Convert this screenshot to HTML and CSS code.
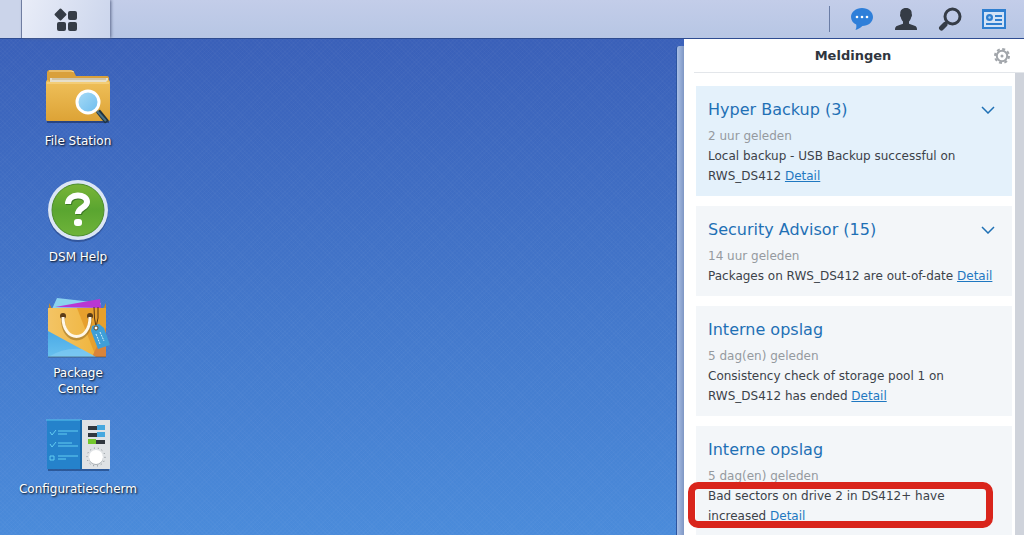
FILE: index.html
```html
<!DOCTYPE html>
<html lang="nl">
	<head>
		<meta charset="utf-8">
		<title>RWS_DS412 - Synology DiskStation</title>
		<meta name="viewport" content="width=device-width, initial-scale=1">
		<link rel="stylesheet" href="styles.css">
	</head>
	<body>
		<header class="taskbar">
			<div class="taskbar-edge"></div>
			<button class="main-menu" type="button" aria-label="Hoofdmenu">
				<svg width="24" height="24" viewBox="0 0 24 24" fill="#353c46">
					<rect x="2" y="3" width="9" height="9" rx="1" transform="rotate(45 6.500 7.500)"/>
					<rect x="14" y="4" width="9" height="9" rx="2"/>
					<rect x="3" y="15" width="9" height="9" rx="2"/>
					<rect x="14" y="15" width="9" height="9" rx="2"/>
				</svg>
			</button>
			<nav class="tray">
				<button type="button" aria-label="Meldingen">
					<svg width="24" height="24" viewBox="0 0 24 24">
						<path d="M12 1C5.800 1 1 5 1 10c0 3.300 2 6 5.200 7.600C6.500 19.500 6.500 21 5.500 23c3-.8 5.200-2.200 6.800-4C18.300 19 23 15 23 10S18.200 1 12 1z" fill="#2f7fd9"/>
						<g fill="#fff"><circle cx="7" cy="10" r="1.300"/><circle cx="12" cy="10" r="1.300"/><circle cx="17" cy="10" r="1.300"/></g>
					</svg>
				</button>
				<button type="button" aria-label="Opties">
					<svg width="24" height="24" viewBox="0 0 24 24">
						<path d="M12 1C8 1 6 3.500 6.300 7c-.6.600-.3 2.600.5 3.200.5 2 1.200 3.300 2.200 4.300v2.300L3.500 18.800C1.500 19.500 1 20.500 1 23h22c0-2.500-.5-3.500-2.500-4.200L15 16.800v-2.300c1-1 1.700-2.300 2.200-4.300.8-.6 1.100-2.600.5-3.200C18 3.500 16 1 12 1z" fill="#353c46"/>
					</svg>
				</button>
				<button type="button" aria-label="Zoeken">
					<svg width="24" height="24" viewBox="0 0 24 24" fill="none" stroke="#353c46">
						<circle cx="14.500" cy="9.500" r="7.500" stroke-width="3"/>
						<path d="M9.500 14.500L7 17" stroke-width="3"/>
						<path d="M7 17.500L3.500 21" stroke-width="5" stroke-linecap="round"/>
					</svg>
				</button>
				<button type="button" aria-label="Widgets">
					<svg width="24" height="24" viewBox="0 0 24 24">
						<path d="M0 2h24v20H0z" fill="#2f7fd0"/>
						<path d="M2 5h20v15H2z" fill="#d3e3f6"/>
						<g fill="#2f7fd0">
							<circle cx="7.500" cy="10.500" r="3.500"/>
							<path d="M13 8h7v2h-7zM13 12h7v2h-7zM4 16h16v2H4z"/>
						</g>
						<circle cx="7.500" cy="10.500" r="1.200" fill="#a9cdf0"/>
					</svg>
				</button>
			</nav>
		</header>

		<main class="workspace">
			<div class="desktop">
				<a class="shortcut" href="#">
					<svg width="64" height="64" viewBox="0 0 64 64">
						<defs>
							<linearGradient id="folder" x1="0" y1="0" x2="0" y2="1">
								<stop offset="0" stop-color="#efc05a"/><stop offset="1" stop-color="#dda336"/>
							</linearGradient>
							<linearGradient id="lens" x1="0" y1="0" x2="1" y2="1">
								<stop offset="0" stop-color="#a9dcf6"/><stop offset="1" stop-color="#6dbcee"/>
							</linearGradient>
						</defs>
						<path d="M1 59h62v2H1z" fill="#1b2c56" opacity=".6"/>
						<path d="M1 11q0-3 3-3h21q2 0 3 2l2 4h31q2 0 2 2v20H1z" fill="#d9a03b"/>
						<path d="M3 9h22l3 1" stroke="#f7d996" fill="none"/>
						<path d="M4 16h58v6H4z" fill="#e6dfcb"/>
						<path d="M6 17h54" stroke="#b9ab8a"/>
						<path d="M0 20q0-2 2-2l2 2h56l2-2q2 0 2 2v38q0 1-2 1H2q-2 0-2-1z" fill="url(#folder)"/>
						<path d="M1 21h62" stroke="#f9dc95"/>
						<path d="M52 49l9 11" stroke="#1f3340" stroke-width="5"/>
						<path d="M51 49l9 10" stroke="#4e7386" stroke-width="2"/>
						<circle cx="42" cy="40" r="11" fill="url(#lens)" stroke="#fff" stroke-width="3"/>
					</svg>
					<span>File Station</span>
				</a>
				<a class="shortcut" href="#">
					<svg width="64" height="64" viewBox="0 0 64 64">
						<defs>
							<linearGradient id="help" x1="0" y1="0" x2="0" y2="1">
								<stop offset="0" stop-color="#79b537"/><stop offset=".5" stop-color="#5aa530"/><stop offset="1" stop-color="#6fb43a"/>
							</linearGradient>
						</defs>
						<circle cx="32" cy="34" r="30" fill="#213a74" opacity=".5"/>
						<circle cx="32" cy="32" r="30" fill="#dbe6f5"/>
						<circle cx="32" cy="32" r="26" fill="url(#help)" stroke="#4b8c2c"/>
						<path d="M23 27c0-11 18-11 18-2 0 6-8 5-8 12" fill="none" stroke="#3c7824" stroke-width="6"/>
						<path d="M22 26c0-11 19-11 19-2 0 6-9 5-9 12" fill="none" stroke="#fff" stroke-width="6"/>
						<rect x="28" y="41" width="8" height="7" rx="3" fill="#fff"/>
					</svg>
					<span>DSM Help</span>
				</a>
				<a class="shortcut" href="#">
					<svg width="64" height="64" viewBox="0 0 64 64">
						<defs>
							<linearGradient id="bag" x1="0" y1="0" x2="1" y2="0">
								<stop offset="0" stop-color="#f3c465"/><stop offset="1" stop-color="#efb236"/>
							</linearGradient>
							<linearGradient id="sea" x1="0" y1="0" x2="0" y2="1">
								<stop offset="0" stop-color="#49a9e6"/><stop offset="1" stop-color="#68c0ef"/>
							</linearGradient>
						</defs>
						<path d="M3 9l3 6H3zM60 9l-3 6h3z" fill="#c88a26"/>
						<path d="M11 4l44 5-2 6H6z" fill="#8bd3ef"/>
						<path d="M9 13L54 5l1 9z" fill="#b936d3"/>
						<path d="M2 14h58v49H2z" fill="url(#bag)"/>
						<path d="M31 14h29v49H50z" fill="#e7a02d"/>
						<path d="M60 33v30H46z" fill="#d9843b"/>
						<path d="M2 37l48 26H2z" fill="url(#sea)"/>
						<path d="M2 63q16-10 34-8l14 8z" fill="#8bd0f3" opacity=".5"/>
						<path d="M2 63h58" stroke="#3c4a52" opacity=".6"/>
						<circle cx="17" cy="22" r="3" fill="#5b3d18"/><circle cx="44" cy="22" r="3" fill="#5b3d18"/>
						<path d="M17 25c0 26 27 26 27 0" fill="none" stroke="#9a7129" stroke-width="4" opacity=".6"/>
						<path d="M17 23c0 26 27 26 27 0" fill="none" stroke="#fff8e8" stroke-width="3"/>
						<path d="M48 13q0 12 2 20 3-8 2-20" fill="none" stroke="#5b3715"/>
						<path d="M46 32l7-2 5 4 6 17-12 4-7-18z" fill="#3f9fd8"/>
						<circle cx="50" cy="34" r="2" fill="#fff" stroke="#68471f"/>
						<path d="M50 40l4 10M54 38l4 9" stroke="#d8effb" stroke-dasharray="2 1"/>
					</svg>
					<span>Package<br>Center</span>
				</a>
				<a class="shortcut" href="#">
					<svg width="64" height="64" viewBox="0 0 64 64">
						<path d="M2 59h61v2H2z" fill="#193b72" opacity=".6"/>
						<path d="M1 10h36v49H1z" fill="#2582cb"/>
						<path d="M0 10h36" stroke="#56c4ee"/>
						<path d="M34 10h2v49h-2z" fill="#1767a9"/>
						<g fill="none" stroke="#63cdf1">
							<path d="M4 22l2 3 4-5M4 34l2 3 4-5M4 46h4v4H4z"/>
							<path d="M12 21h20M12 24h9M12 33h14M12 36h20M12 46h20M12 49h8"/>
						</g>
						<path d="M36 10h28v49H36z" fill="#dfe2e5"/>
						<path d="M42 16h9v4h-9zM42 23h9v4h-9zM50 30h9v4h-9z" fill="#30363e"/>
						<path d="M51 15h8v5h-8zM51 22h8v5h-8z" fill="#47a8df"/>
						<path d="M42 29h8v5h-8z" fill="#73c82e"/>
						<circle cx="50" cy="47" r="9" fill="none" stroke="#7d858c" stroke-dasharray="1 3"/>
						<circle cx="50" cy="48" r="7" fill="#a9afb4"/>
						<circle cx="50" cy="47" r="7" fill="#fff"/>
					</svg>
					<span>Configuratiescherm</span>
				</a>
			</div>

			<div class="widget-panel"></div>

			<section class="notifications">
				<div class="notifications-head">
					<h1>Meldingen</h1>
					<button type="button" aria-label="Instellingen">
						<svg width="18" height="18" viewBox="0 0 18 18" fill="none" stroke="#a2a6ab">
							<circle cx="9" cy="9" r="7" stroke-width="2" stroke-dasharray="3 2.500"/>
							<circle cx="9" cy="9" r="5.200" stroke-width="2"/>
							<circle cx="9" cy="9" r="1.500" fill="#a2a6ab" stroke="none"/>
						</svg>
					</button>
				</div>
				<div class="notifications-body">
					<div class="cards">
						<article class="card unread">
							<div class="card-title">
								<h2>Hyper Backup (3)</h2>
								<button type="button" aria-label="Meer tonen">
									<svg width="14" height="8" viewBox="0 0 14 8"><path d="M1 1l6 6 6-6" fill="none" stroke="#1f70b5" stroke-width="1.500"/></svg>
								</button>
							</div>
							<time>2 uur geleden</time>
							<p>Local backup - USB Backup successful on RWS_DS412 <a href="#">Detail</a></p>
						</article>
						<article class="card">
							<div class="card-title">
								<h2>Security Advisor (15)</h2>
								<button type="button" aria-label="Meer tonen">
									<svg width="14" height="8" viewBox="0 0 14 8"><path d="M1 1l6 6 6-6" fill="none" stroke="#1f70b5" stroke-width="1.500"/></svg>
								</button>
							</div>
							<time>14 uur geleden</time>
							<p>Packages on RWS_DS412 are out-of-date <a href="#">Detail</a></p>
						</article>
						<article class="card">
							<div class="card-title"><h2>Interne opslag</h2></div>
							<time>5 dag(en) geleden</time>
							<p>Consistency check of storage pool 1 on RWS_DS412 has ended <a href="#">Detail</a></p>
						</article>
						<article class="card">
							<div class="card-title"><h2>Interne opslag</h2></div>
							<time>5 dag(en) geleden</time>
							<p class="marked">Bad sectors on drive 2 in DS412+ have increased <a href="#">Detail</a></p>
						</article>
					</div>
					<div class="scrollbar"></div>
				</div>
			</section>
		</main>
	</body>
</html>
```

FILE: styles.css
```css
* { box-sizing: border-box; margin: 0; padding: 0; }

body {
	display: flex;
	flex-direction: column;
	height: 100vh;
	overflow: hidden;
	font-family: Verdana, "DejaVu Sans", sans-serif;
	font-size: 12px;
	color: #3c4249;
}
button {
	display: flex;
	align-items: center;
	justify-content: center;
	border: none;
	background: none;
	cursor: pointer;
}
svg { display: block; flex: none; }

/* taskbar */
.taskbar {
	display: flex;
	flex: none;
	height: 39px;
	background: linear-gradient(#c3cde9, #b7c6e4);
	border-bottom: 1px solid #2e4c91;
	z-index: 1;
}
.taskbar-edge {
	width: 22px;
	background: #cbd4ea;
	border-right: 1px solid #7483a6;
}
.main-menu {
	width: 88px;
	background: linear-gradient(110deg, #e9edf8, #cbd5ec);
	box-shadow: 1px 0 3px #5a6688;
}
.tray {
	display: flex;
	align-items: center;
	margin-left: auto;
	padding: 0 8px 0 11px;
	background: linear-gradient(#6a7da6, #6a7da6) no-repeat left 6px / 1px 26px;
}
.tray button { width: 44px; height: 38px; }

/* desktop */
.workspace {
	display: flex;
	flex: 1;
	min-height: 0;
	background:
		repeating-linear-gradient(45deg, rgba(255,255,255,.02) 0 1px, transparent 1px 3px),
		repeating-linear-gradient(-45deg, rgba(255,255,255,.02) 0 1px, transparent 1px 3px),
		linear-gradient(#3a60b9, #4a8bda);
}
.desktop {
	display: grid;
	flex: 1;
	grid-template-columns: 140px;
	grid-auto-rows: 116px;
	align-content: start;
	padding: 23px 8px 0;
}
.shortcut {
	display: flex;
	flex-direction: column;
	align-items: center;
	gap: 7px;
	color: #fff;
	line-height: 16px;
	text-align: center;
	text-decoration: none;
	text-shadow: 1px 1px 2px #000;
}

/* notifications */
.widget-panel {
	width: 8px;
	margin-top: 7px;
	background: linear-gradient(90deg, #a9bfe6, #7f97c4);
	border-left: 1px solid #2c549f;
	border-top-left-radius: 3px;
}
.notifications {
	display: flex;
	flex-direction: column;
	width: 340px;
	background: #fff;
}
.notifications-head {
	display: flex;
	align-items: center;
	flex: none;
	height: 34px;
	margin-left: 10px;
	padding-right: 12px;
	border-bottom: 1px solid #e3e6ea;
}
.notifications-head h1 {
	flex: 1;
	padding-left: 20px;
	font-size: 13px;
	line-height: 20px;
	text-align: center;
	color: #30363e;
}
.notifications-head button { width: 20px; height: 20px; }
.notifications-body {
	display: flex;
	flex: 1;
	min-height: 0;
	overflow: hidden;
}
.cards {
	display: flex;
	flex: 1;
	flex-direction: column;
	gap: 10px;
	padding: 13px 3px 0 12px;
}
.scrollbar { width: 9px; background: #cfd3db; }

.card {
	flex: none;
	padding: 12px 12px 10px;
	background: #f3f6f9;
	line-height: 20px;
}
.card.unread { background: #e4f1fb; }
.card-title {
	display: flex;
	align-items: center;
	justify-content: space-between;
	margin-bottom: 4px;
}
.card h2 {
	font-size: 16px;
	font-weight: normal;
	line-height: 24px;
	color: #1f70b5;
}
.card-title button { width: 24px; height: 24px; }
.card time { display: block; color: #959a9f; }
.card a { color: #1f78c1; }

.marked { position: relative; }
.marked::after {
	content: "";
	position: absolute;
	top: -4px;
	right: 7px;
	bottom: -2px;
	left: -20px;
	border: 7px solid #d9251c;
	border-radius: 10px;
	pointer-events: none;
}
```
